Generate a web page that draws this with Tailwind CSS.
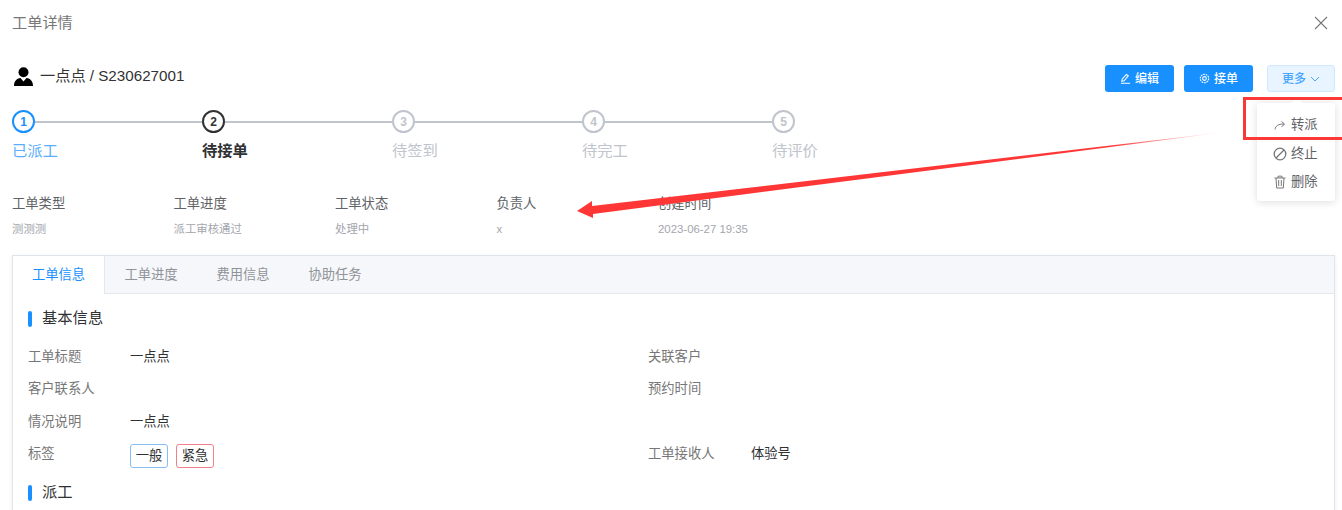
<!doctype html>
<html lang="zh">
<head>
    <meta charset="UTF-8">
    <title>工单详情</title>
    <script src="https://cdn.jsdelivr.net/npm/@tailwindcss/browser@4"></script>
</head>
<body class="bg-white font-['Liberation_Sans','Noto_Sans_CJK_SC',sans-serif] overflow-hidden">
<main class="relative h-[510px] w-[1342px] overflow-hidden">

    <!-- Title -->
    <div class="flex items-center justify-between h-[46px] pl-3 pr-[14px] text-[15.2px] text-[#777]">
        <span>工单详情</span>
        <svg class="w-[14px] h-[14px]" viewBox="0 0 14 14" fill="none" stroke="#777" stroke-width="1.1"><path d="M1 1l12 12M13 1L1 13"/></svg>
    </div>

    <!-- Customer + actions -->
    <div class="flex items-center justify-between h-[27px] mt-[19px] pl-[14px] pr-[7px]">
        <div class="flex items-center gap-[7px] mb-[4px] text-[15.2px] text-[#333]">
            <svg class="w-[19px] h-[19px]" viewBox="0 0 19 19" fill="#000"><circle cx="9.5" cy="5.2" r="5"/><path d="M0 19c0-5 2.500-7.300 6.500-8L9.500 14.500l3-3.500c4 .7 6.500 3 6.500 8z"/></svg>
            <span>一点点 / S230627001</span>
        </div>
        <div class="flex items-center text-[12px]">
            <button class="flex items-center justify-center gap-1 w-[69px] h-[27px] rounded-[3px] bg-[#1890ff] font-medium text-white">
                <svg class="w-[11px] h-[11px]" viewBox="0 0 12 12" fill="none" stroke="#fff" stroke-width="1.200"><path d="M2 9l.5-2.500L7 1.500l2 1.500-4.500 5.500zM1 11.200h10"/></svg>
                编辑
            </button>
            <button class="flex items-center justify-center gap-1 w-[69px] h-[27px] ml-[10px] rounded-[3px] bg-[#1890ff] font-medium text-white">
                <svg class="w-[11px] h-[11px]" viewBox="0 0 12 12" fill="none" stroke="#fff" stroke-width="1.200"><circle cx="6" cy="6" r="2"/><circle cx="6" cy="6" r="4.600" stroke-dasharray="2 .8"/></svg>
                接单
            </button>
            <button class="flex items-center justify-center gap-1 w-[68px] h-[27px] ml-[14px] rounded-[3px] bg-[#e8f4ff] border border-[#d1e9ff] font-medium text-[#46a6ff]">
                更多
                <svg class="w-[10px] h-[10px]" viewBox="0 0 10 10" fill="none" stroke="#46a6ff" stroke-width="1"><path d="M1 3l4 4 4-4"/></svg>
            </button>
        </div>
    </div>

    <!-- Steps -->
    <div class="flex pl-3 mt-[18px]">
        <div class="w-[190px]">
            <div class="flex items-center">
                <span class="flex items-center justify-center shrink-0 w-[23px] h-[23px] rounded-full border-2 border-[#1890ff] text-[12px] font-bold text-[#1890ff]">1</span>
                <span class="flex-1 h-[2px] bg-[#c0c4cc]"></span>
            </div>
            <div class="mt-[7px] text-[15.300px] leading-[22px] text-[#5aaefc]">已派工</div>
        </div>
        <div class="w-[190px]">
            <div class="flex items-center">
                <span class="flex items-center justify-center shrink-0 w-[23px] h-[23px] rounded-full border-2 border-[#303133] text-[12px] font-bold text-[#303133]">2</span>
                <span class="flex-1 h-[2px] bg-[#c0c4cc]"></span>
            </div>
            <div class="mt-[7px] text-[15.300px] leading-[22px] font-bold text-[#303133]">待接单</div>
        </div>
        <div class="w-[190px]">
            <div class="flex items-center">
                <span class="flex items-center justify-center shrink-0 w-[23px] h-[23px] rounded-full border-2 border-[#c0c4cc] text-[12px] font-bold text-[#c0c4cc]">3</span>
                <span class="flex-1 h-[2px] bg-[#c0c4cc]"></span>
            </div>
            <div class="mt-[7px] text-[15.300px] leading-[22px] text-[#c0c4cc]">待签到</div>
        </div>
        <div class="w-[190px]">
            <div class="flex items-center">
                <span class="flex items-center justify-center shrink-0 w-[23px] h-[23px] rounded-full border-2 border-[#c0c4cc] text-[12px] font-bold text-[#c0c4cc]">4</span>
                <span class="flex-1 h-[2px] bg-[#c0c4cc]"></span>
            </div>
            <div class="mt-[7px] text-[15.300px] leading-[22px] text-[#c0c4cc]">待完工</div>
        </div>
        <div class="w-[190px]">
            <span class="flex items-center justify-center w-[23px] h-[23px] rounded-full border-2 border-[#c0c4cc] text-[12px] font-bold text-[#c0c4cc]">5</span>
            <div class="mt-[7px] text-[15.300px] leading-[22px] text-[#c0c4cc]">待评价</div>
        </div>
    </div>

    <!-- Summary -->
    <div class="grid grid-cols-[161.5px_161.5px_161.5px_161.5px_161.5px] pl-3 mt-[32px]">
        <div><div class="text-[13.300px] leading-[20px] text-[#606266]">工单类型</div><div class="mt-[6px] text-[11.400px] leading-[18px] text-[#a3a6ad]">测测测</div></div>
        <div><div class="text-[13.300px] leading-[20px] text-[#606266]">工单进度</div><div class="mt-[6px] text-[11.400px] leading-[18px] text-[#a3a6ad]">派工审核通过</div></div>
        <div><div class="text-[13.300px] leading-[20px] text-[#606266]">工单状态</div><div class="mt-[6px] text-[11.400px] leading-[18px] text-[#a3a6ad]">处理中</div></div>
        <div><div class="text-[13.300px] leading-[20px] text-[#606266]">负责人</div><div class="mt-[6px] text-[11.400px] leading-[18px] text-[#a3a6ad]">x</div></div>
        <div><div class="text-[13.300px] leading-[20px] text-[#606266]">创建时间</div><div class="mt-[6px] text-[11.400px] leading-[18px] text-[#a3a6ad]">2023-06-27 19:35</div></div>
    </div>

    <!-- Tabs card -->
    <div class="ml-3 mt-[17px] w-[1323px] h-[300px] border border-[#dfe4ed] shadow-[0_1px_4px_rgba(0,0,0,0.08)]">
        <div class="flex h-[38px] bg-[#f5f7fa] border-b border-[#e4e7ed] text-[13.300px] text-[#909399]">
            <div class="flex items-center justify-center w-[92px] h-[38px] bg-white border-r border-[#e4e7ed] text-[#1890ff]">工单信息</div>
            <div class="flex items-center justify-center w-[92px]">工单进度</div>
            <div class="flex items-center justify-center w-[92px]">费用信息</div>
            <div class="flex items-center justify-center w-[92px]">协助任务</div>
        </div>

        <div class="pl-[15px] pt-[16px]">
            <div class="flex items-center h-[17px] text-[15.300px] text-[#303133]">
                <span class="w-[4px] h-[16px] rounded-[2px] bg-[#1890ff] mr-[10px]"></span>基本信息
            </div>

            <div class="grid grid-cols-[620px_1fr] mt-[13.500px] text-[13.300px] text-[#303133]">
                <div class="flex items-center h-[32.500px]"><span class="w-[102px] text-[#777]">工单标题</span><span>一点点</span></div>
                <div class="flex items-center h-[32.500px]"><span class="w-[103px] text-[#777]">关联客户</span></div>
                <div class="flex items-center h-[32.500px]"><span class="w-[102px] text-[#777]">客户联系人</span></div>
                <div class="flex items-center h-[32.500px]"><span class="w-[103px] text-[#777]">预约时间</span></div>
                <div class="flex items-center h-[32.500px]"><span class="w-[102px] text-[#777]">情况说明</span><span>一点点</span></div>
                <div class="h-[32.500px]"></div>
                <div class="flex items-center h-[32.500px]">
                    <span class="w-[102px] text-[#777]">标签</span>
                    <span class="flex items-center justify-center w-[38px] h-[24px] mt-[4px] rounded-[3px] border border-[#85bdf5]">一般</span>
                    <span class="flex items-center justify-center w-[38px] h-[24px] mt-[4px] ml-2 rounded-[3px] border border-[#f0808c]">紧急</span>
                </div>
                <div class="flex items-center h-[32.500px]"><span class="w-[103px] text-[#777]">工单接收人</span><span>体验号</span></div>
            </div>

            <div class="flex items-center h-[17px] mt-[13.500px] text-[15.300px] text-[#303133]">
                <span class="w-[4px] h-[16px] rounded-[2px] bg-[#1890ff] mr-[10px]"></span>派工
            </div>
        </div>
    </div>

    <!-- Dropdown menu -->
    <div class="absolute left-[1257px] top-[103px] w-[78px] h-[98px] rounded-[3px] bg-white shadow-[0_1px_8px_rgba(0,0,0,0.14)] pt-[8px] text-[13.300px] text-[#606266]">
        <span class="absolute left-[36px] -top-[4px] w-2 h-2 rotate-45 bg-white"></span>
        <div class="flex items-center h-[28.500px] pl-[17px] gap-[5px]">
            <svg class="w-[12px] h-[12px]" viewBox="0 0 12 12" fill="none" stroke="#777" stroke-width="1"><path d="M1 10.500C1.500 7 4 5 10 5M7.500 2.500L10.500 5 7.500 8"/></svg>
            <span>转派</span>
        </div>
        <div class="flex items-center h-[28.500px] pl-[16px] gap-[4px]">
            <svg class="w-[14px] h-[14px]" viewBox="0 0 14 14" fill="none" stroke="#777" stroke-width="1.300"><circle cx="7" cy="7" r="5.800"/><path d="M3 11l8-8"/></svg>
            <span>终止</span>
        </div>
        <div class="flex items-center h-[28.500px] pl-[16px] gap-[4px]">
            <svg class="w-[14px] h-[14px]" viewBox="0 0 14 14" fill="none" stroke="#777" stroke-width="1"><path d="M1.500 3h11M5 3V1.200h4V3M3 3l.7 10h6.600L11 3M5.700 5v6M8.300 5v6"/></svg>
            <span>删除</span>
        </div>
    </div>

    <!-- Annotation: red box and arrow -->
    <div class="absolute left-[1243px] top-[97px] w-[102px] h-[43px] border-[3px] border-[#fb3838]"></div>
    <svg class="absolute left-0 top-0 pointer-events-none" width="1342" height="510" viewBox="0 0 1342 510">
        <defs>
            <linearGradient id="arrowFade" gradientUnits="userSpaceOnUse" x1="578" y1="0" x2="1226" y2="0">
                <stop offset="0" stop-color="#ff3636"/>
                <stop offset="0.82" stop-color="#ff3636"/>
                <stop offset="1" stop-color="#ff3636" stop-opacity="0"/>
            </linearGradient>
        </defs>
        <polygon points="577,211 592,201 592,206 1226,132 593,214 593,218" fill="url(#arrowFade)"/>
    </svg>
</main>
</body>
</html>
